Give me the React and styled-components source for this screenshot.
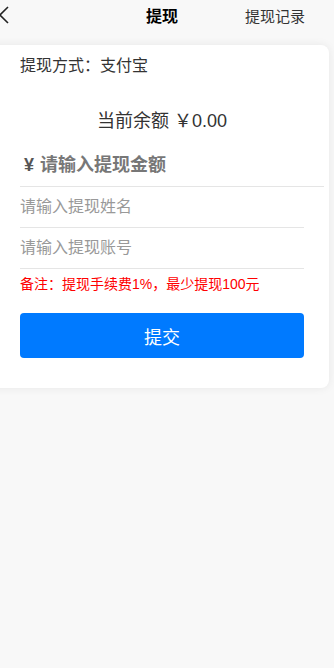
import React from 'react';
import styled, {createGlobalStyle} from 'styled-components';

const GlobalStyle = createGlobalStyle`
  html, body {
    margin: 0;
    padding: 0;
    background: #f8f8f8;
    overflow-x: hidden;
  }
  body {
    font-family: "Liberation Sans", "Noto Sans CJK SC", sans-serif;
    color: #333;
  }
  * {
    box-sizing: border-box;
  }
`;

const Page = styled.div`
  min-height: 668px;
  background: #f8f8f8;
`;

const Header = styled.div`
  display: grid;
  grid-template-columns: 1fr auto 1fr;
  align-items: center;
  height: 30px;
  margin-left: -10px;
`;

const BackButton = styled.div`
  display: flex;
  align-items: center;
  padding-left: 8px;
  height: 30px;
  color: #222;
`;

const Title = styled.div`
  font-size: 16px;
  font-weight: bold;
  color: #000;
`;

const RecordLink = styled.div`
  justify-self: end;
  padding-right: 29px;
  font-size: 15px;
  color: #333;
`;

const Card = styled.div`
  margin: 15px 5px 0 -20px;
  padding: 10px 25px 30px 40px;
  background: #fff;
  border-radius: 8px;
  box-shadow: 0 0 10px rgba(0, 0, 0, 0.07);
`;

const Method = styled.div`
  font-size: 16px;
  line-height: 22px;
  color: #333;
`;

const Balance = styled.div`
  margin-top: 29px;
  text-align: center;
  font-size: 18px;
  line-height: 30px;
  color: #333;
`;

const Field = styled.label`
  display: flex;
  align-items: center;
  height: ${p => (p.$big ? 42 : 41)}px;
  margin-top: ${p => (p.$big ? 9 : 0)}px;
  margin-right: ${p => (p.$big ? -20 : 0)}px;
  border-bottom: 1px solid #e5e5e5;
`;

const Currency = styled.span`
  font-size: 18px;
  font-weight: bold;
  color: #555;
  padding: 0 6px 0 4px;
`;

const Input = styled.input`
  flex: 1;
  min-width: 0;
  border: none;
  outline: none;
  padding: 0;
  background: transparent;
  font-family: inherit;
  font-size: ${p => (p.$big ? 18 : 16)}px;
  font-weight: ${p => (p.$big ? 'bold' : 'normal')};
  color: #333;

  &::placeholder {
    color: ${p => (p.$big ? '#777' : '#999')};
  }
`;

const Remark = styled.div`
  margin-top: 6px;
  font-size: 14px;
  line-height: 18px;
  color: #ff0000;
`;

const SubmitButton = styled.button`
  display: block;
  width: 100%;
  height: 45px;
  margin-top: 20px;
  border: none;
  border-radius: 4px;
  background: #007aff;
  color: #fff;
  font-family: inherit;
  font-size: 18px;
`;

export default function App() {
  return (
    <Page>
      <GlobalStyle />
      <Header>
        <BackButton>
          <svg width="12" height="18" viewBox="0 0 12 18" fill="none">
            <path d="M10 1L2 9l8 8" stroke="#222" strokeWidth="1.6" />
          </svg>
        </BackButton>
        <Title>提现</Title>
        <RecordLink>提现记录</RecordLink>
      </Header>
      <Card>
        <Method>提现方式：支付宝</Method>
        <Balance>当前余额 ￥0.00</Balance>
        <Field $big>
          <Currency>¥</Currency>
          <Input $big placeholder="请输入提现金额" />
        </Field>
        <Field>
          <Input placeholder="请输入提现姓名" />
        </Field>
        <Field>
          <Input placeholder="请输入提现账号" />
        </Field>
        <Remark>备注：提现手续费1%，最少提现100元</Remark>
        <SubmitButton>提交</SubmitButton>
      </Card>
    </Page>
  );
}
